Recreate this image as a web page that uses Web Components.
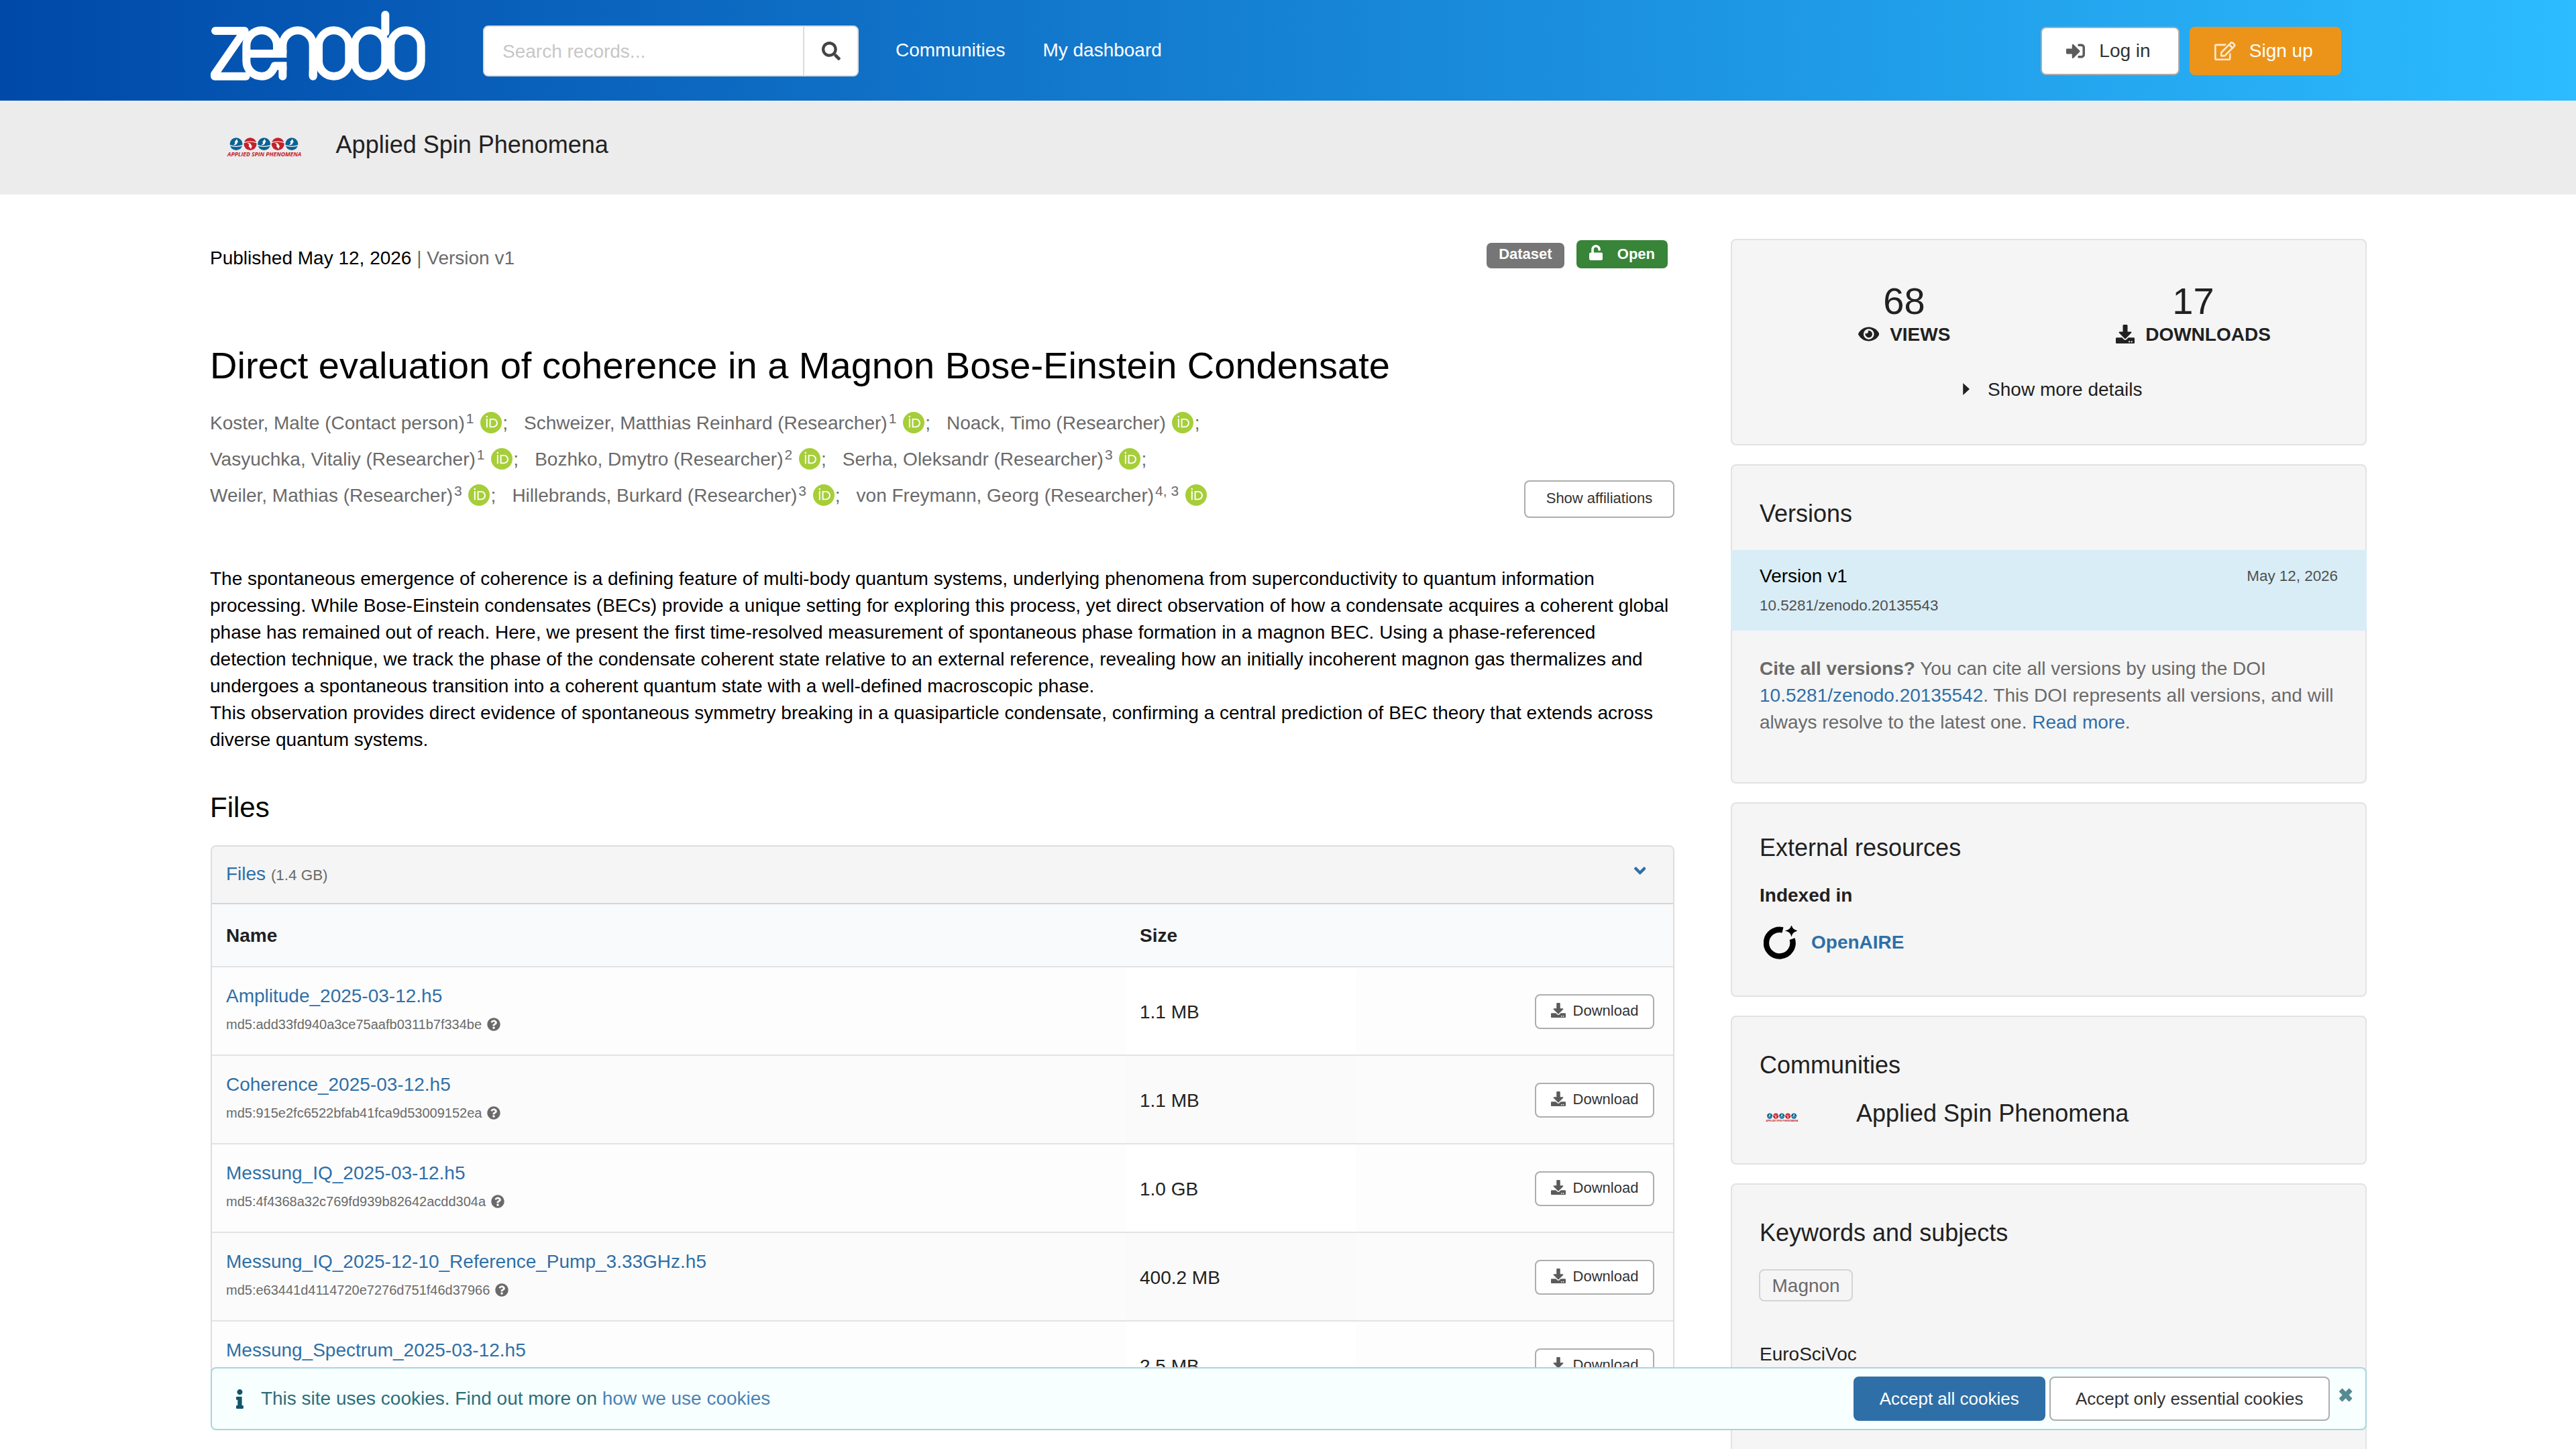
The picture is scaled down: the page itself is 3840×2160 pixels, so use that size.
<!DOCTYPE html>
<html lang="en">
<head>
<meta charset="utf-8">
<title>Direct evaluation of coherence in a Magnon Bose-Einstein Condensate</title>
<style>
	html, body {
		margin: 0;
		height: 2160px;
		overflow: hidden;
		background: #fff;
	}

	body {
		font: 28px/40px "Liberation Sans", Arial, sans-serif;
		color: #212121;
		--link: #2f6fa7;
		--muted: #6a6a6a;
	}
</style>
</head>
<body>
<record-page></record-page>

<script>
const ICONS = {
	search: [512, 'M505 442.7L405.3 343c-4.5-4.5-10.6-7-17-7H372c27.6-35.3 44-79.7 44-128C416 93.1 322.9 0 208 0S0 93.1 0 208s93.1 208 208 208c48.3 0 92.7-16.4 128-44v16.3c0 6.4 2.5 12.5 7 17l99.7 99.7c9.4 9.4 24.6 9.4 33.9 0l28.3-28.3c9.4-9.4 9.4-24.6.1-34zM208 336c-70.7 0-128-57.2-128-128 0-70.7 57.2-128 128-128 70.7 0 128 57.2 128 128 0 70.7-57.2 128-128 128z'],
	signin: [512, 'M416 448h-84c-6.6 0-12-5.4-12-12v-40c0-6.6 5.4-12 12-12h84c17.7 0 32-14.3 32-32V160c0-17.7-14.3-32-32-32h-84c-6.6 0-12-5.4-12-12V76c0-6.6 5.4-12 12-12h84c53 0 96 43 96 96v192c0 53-43 96-96 96zm-47-201L201 79c-15-15-41-4.5-41 17v96H24c-13.3 0-24 10.7-24 24v96c0 13.3 10.7 24 24 24h136v96c0 21.5 26 32 41 17l168-168c9.3-9.4 9.3-24.6 0-34z'],
	edit: [576, 'M402.3 344.9l32-32c5-5 13.7-1.5 13.7 5.7V464c0 26.5-21.5 48-48 48H48c-26.5 0-48-21.5-48-48V112c0-26.5 21.5-48 48-48h273.5c7.1 0 10.7 8.6 5.7 13.7l-32 32c-1.5 1.5-3.5 2.3-5.7 2.3H48v352h352V350.5c0-2.1.8-4.1 2.3-5.6zm156.6-201.8L296.3 405.7l-90.4 10c-26.2 2.9-48.5-19.2-45.6-45.6l10-90.4L432.9 17.1c22.9-22.9 59.9-22.9 82.7 0l43.2 43.2c22.9 22.9 22.9 60 .1 82.8zM460.1 174L402 115.9 216.2 301.8l-7.3 65.3 65.3-7.3L460.1 174zm64.8-79.7l-43.2-43.2c-4.1-4.1-10.8-4.1-14.8 0L436 82l58.1 58.1 30.9-30.9c4-4.2 4-10.8-.1-14.9z'],
	unlock: [448, 'M400 256H152V152.9c0-39.6 31.7-72.5 71.3-72.9 40-.4 72.7 32.1 72.7 72v16c0 13.3 10.7 24 24 24h32c13.3 0 24-10.7 24-24v-16C376 68 307.5-.3 223.5 0 139.5.3 72 69.5 72 153.5V256H48c-26.5 0-48 21.5-48 48v160c0 26.5 21.5 48 48 48h352c26.5 0 48-21.5 48-48V304c0-26.5-21.5-48-48-48z'],
	eye: [576, 'M572.52 241.4C518.29 135.59 410.93 64 288 64S57.68 135.64 3.48 241.41a32.35 32.35 0 0 0 0 29.19C57.71 376.41 165.07 448 288 448s230.32-71.64 284.52-177.41a32.35 32.35 0 0 0 0-29.19zM288 400a144 144 0 1 1 144-144 143.93 143.93 0 0 1-144 144zm0-240a95.31 95.31 0 0 0-25.31 3.79 47.85 47.85 0 0 1-66.9 66.9A95.78 95.78 0 1 0 288 160z'],
	download: [512, 'M216 0h80c13.3 0 24 10.7 24 24v168h87.7c17.8 0 26.7 21.5 14.1 34.1L269.7 378.3c-7.5 7.5-19.8 7.5-27.3 0L90.1 226.1c-12.6-12.6-3.7-34.1 14.1-34.1H192V24c0-13.3 10.7-24 24-24zm296 376v112c0 13.3-10.7 24-24 24H24c-13.3 0-24-10.7-24-24V376c0-13.3 10.7-24 24-24h146.7l49 49c20.1 20.1 52.5 20.1 72.6 0l49-49H488c13.3 0 24 10.7 24 24zm-124 88c0-11-9-20-20-20s-20 9-20 20 9 20 20 20 20-9 20-20zm64 0c0-11-9-20-20-20s-20 9-20 20 9 20 20 20 20-9 20-20z'],
	question: [512, 'M504 256c0 136.997-111.043 248-248 248S8 392.997 8 256C8 119.083 119.043 8 256 8s248 111.083 248 248zM262.655 90c-54.497 0-89.255 22.957-116.549 63.758-3.536 5.286-2.353 12.415 2.715 16.258l34.699 26.31c5.205 3.947 12.621 3.008 16.665-2.122 17.864-22.658 30.113-35.797 57.303-35.797 20.429 0 45.698 13.148 45.698 32.958 0 14.976-12.363 22.667-32.534 33.976C247.128 238.528 216 254.941 216 296v4c0 6.627 5.373 12 12 12h56c6.627 0 12-5.373 12-12v-1.333c0-28.462 83.186-29.647 83.186-106.667 0-58.002-60.165-102-116.531-102zM256 338c-25.365 0-46 20.635-46 46 0 25.364 20.635 46 46 46s46-20.636 46-46c0-25.364-20.635-46-46-46z'],
	down: [320, 'M143 352.3L7 216.3c-9.4-9.4-9.4-24.6 0-33.9l22.6-22.6c9.4-9.4 24.6-9.4 33.9 0l96.4 96.4 96.4-96.4c9.4-9.4 24.6-9.4 33.9 0l22.6 22.6c9.4 9.4 9.4 24.6 0 33.9l-136 136c-9.2 9.4-24.4 9.4-33.8 0z'],
	caret: [192, 'M4 92L184 256L4 420z'],
	info: [192, 'M20 424.229h20V279.771H20c-11.046 0-20-8.954-20-20V212c0-11.046 8.954-20 20-20h112c11.046 0 20 8.954 20 20v212.229h20c11.046 0 20 8.954 20 20V492c0 11.046-8.954 20-20 20H20c-11.046 0-20-8.954-20-20v-47.771c0-11.046 8.954-20 20-20zM96 0C56.235 0 24 32.235 24 72s32.235 72 72 72 72-32.235 72-72S135.764 0 96 0z'],
	close: [352, 'M176 174L103 101Q91 89 79 101L21 159Q9 171 21 183L94 256L21 329Q9 341 21 353L79 411Q91 423 103 411L176 338L249 411Q261 423 273 411L331 353Q343 341 331 329L258 256L331 183Q343 171 331 159L273 101Q261 89 249 101z']
};

// registers an element whose shadow root is rendered once from its attributes
function define(name, render) {
	customElements.define(name, class extends HTMLElement {
		connectedCallback() {
			if (this.shadowRoot) {
				return;
			}
			const t = document.createElement('template');
			t.innerHTML = render(this);
			this.attachShadow({ mode: 'open' }).appendChild(t.content.cloneNode(true));
		}
	});
}

define('ui-icon', e => {
	const [w, d] = ICONS[e.getAttribute('name')];
	return `
		<style>
			:host { display: inline-flex; flex: none; }
			svg { display: block; height: 1em; width: ${w / 512}em; fill: currentColor; }
		</style>
		<svg viewBox="0 0 ${w} 512"><path d="${d}"/></svg>`;
});

define('ui-button', () => `
	<style>
		:host {
			display: inline-flex;
			flex: none;
			align-items: center;
			justify-content: center;
			box-sizing: border-box;
			height: 72px;
			border: 2px solid #adadad;
			border-radius: 8px;
			background: #fff;
			color: #333;
			white-space: nowrap;
		}
		:host([kind=primary]) { background: #2f6fa7; border-color: #2f6fa7; color: #fff; }
		:host([kind=signup]) { background: #ec9419; border-color: #ec9419; color: #fff; }
		:host([size=small]) { font-size: 22px; }
	</style>
	<slot></slot>`);

define('zenodo-logo', () => `
	<style>
		:host { display: block; width: 322px; height: 106px; }
		svg { display: block; width: 100%; height: 100%; fill: none; stroke: #fff; stroke-width: 36; stroke-linecap: round; stroke-linejoin: round; }
	</style>
	<svg viewBox="39 15 966 318" role="img" aria-label="Zenodo home">
		<polyline points="63,108 194,108 60,302 60,311 200,311"/>
		<path stroke-linecap="butt" d="M382 210H202M339 212V175a68.5 69 0 0 0-137 0v68a68.5 68 0 0 0 68.5 68c30 0 48-20 58-46H382"/>
		<line x1="364" y1="266" x2="364" y2="311"/>
		<path d="M364 210V175a68 69 0 0 1 136 0V311" stroke-linecap="butt"/>
		<line x1="500" y1="290" x2="500" y2="311"/>
		<rect x="525" y="106" width="136" height="205" rx="68"/>
		<rect x="686" y="106" width="137" height="205" rx="68"/>
		<line x1="823" y1="36" x2="823" y2="115"/>
		<rect x="847" y="106" width="136" height="205" rx="68"/>
	</svg>`);

define('community-logo', () => {
	const ball = (x, up) => `
		<g transform="translate(${x} 60)${up ? '' : ' scale(1 -1)'}">
			<circle r="28.5" fill="${up ? '#0b6293' : '#c4212b'}"/>
			<path d="M-29 6Q0 16 29 6" fill="none" stroke="#fff" stroke-width="3.5"/>
			<path d="M-14 5Q-5 2-4-7L-8-8 3-22 9-7 5-8Q5 6-14 5z" fill="#fff"/>
		</g>`;
	return `
		<style>
			:host { display: block; flex: none; width: 112.6px; height: 30.6px; }
			svg { display: block; width: 100%; height: 100%; overflow: visible; }
		</style>
		<svg viewBox="24 28 338 92">
			${[66, 129, 191, 253, 315].map((x, i) => ball(x, i % 2 === 0)).join('')}
			<text x="27" y="116" textLength="331" lengthAdjust="spacingAndGlyphs" font-family="Open Sans, sans-serif" font-size="28" font-style="italic" font-weight="700" fill="#c4212b">APPLIED SPIN PHENOMENA</text>
		</svg>`;
});

define('site-header', () => `
	<style>
		:host {
			display: flex;
			align-items: center;
			box-sizing: border-box;
			height: 150px;
			padding: 0 350px 0 313px;
			background: linear-gradient(90deg, #0049a9, #2cbcff);
		}
		zenodo-logo { margin-bottom: 14px; }
		.search {
			display: flex;
			box-sizing: border-box;
			width: 560px;
			height: 76px;
			margin: 2px 0 0 85px;
			border: 2px solid #dcdcdc;
			border-radius: 8px;
			background: #fff;
			line-height: 73px;
		}
		.field { flex: 1; padding-left: 27px; color: #c7c7c7; border-right: 2px solid #dcdcdc; }
		.go { display: flex; width: 79px; align-items: center; justify-content: center; color: #444; }
		nav { display: flex; gap: 56px; margin-left: 55px; color: #fff; }
		.account { display: flex; gap: 15px; margin: 2px 0 0 auto; line-height: 42px; }
		.account ui-button { box-sizing: border-box; padding-right: 5px; }
		ui-icon { opacity: .8; }
		.go ui-icon { opacity: 1; }
	</style>
	<zenodo-logo></zenodo-logo>
	<div class="search">
		<span class="field">Search records...</span>
		<span class="go"><ui-icon name="search"></ui-icon></span>
	</div>
	<nav><span>Communities</span><span>My dashboard</span></nav>
	<div class="account">
		<ui-button style="width: 207px; gap: 21px"><ui-icon name="signin"></ui-icon>Log in</ui-button>
		<ui-button kind="signup" style="width: 226px; gap: 20px"><ui-icon name="edit"></ui-icon>Sign up</ui-button>
	</div>`);

define('community-bar', () => `
	<style>
		:host {
			display: flex;
			gap: 50px;
			box-sizing: border-box;
			height: 140px;
			padding: 44px 0 0 338px;
			background: #ececec;
			font-size: 36px;
			line-height: 44px;
		}
		community-logo { margin-top: 10px; }
	</style>
	<community-logo></community-logo>
	<span>Applied Spin Phenomena</span>`);

define('record-author', e => `
	<style>
		:host { display: inline-flex; height: 54px; line-height: 56px; white-space: nowrap; }
		sup { margin-left: 2px; font-size: 21px; line-height: 42px; vertical-align: top; }
		svg { display: block; width: 32px; height: 32px; margin: 11px 1.2px 0 9.7px; }
	</style>
	<span><slot></slot></span>${e.dataset.affiliation ? `<sup>${e.dataset.affiliation}</sup>` : ''}
	<svg viewBox="0 0 256 256">
		<circle cx="128" cy="128" r="128" fill="#a6ce39"/>
		<g fill="#fff">
			<rect x="70.9" y="79.1" width="15.4" height="107.1"/>
			<circle cx="78.6" cy="56.8" r="10.1"/>
			<path d="M108.9 79.1h41.6c39.6 0 57 28.3 57 53.6 0 27.5-21.5 53.6-56.8 53.6h-41.8V79.1zm15.4 93.3h24.5c34.9 0 42.9-26.5 42.9-39.7C191.7 111.2 178 93 148 93h-23.7v79.4z"/>
		</g>
	</svg>${e.hasAttribute('last') ? '' : '<span>;</span>'}`);

define('file-row', e => `
	<style>
		:host { display: flex; box-sizing: border-box; height: 132px; border-top: 2px solid #e2e3e4; background: #fdfdfd; }
		:host(:nth-of-type(even)) { background: #fbfbfb; }
		.name { width: 1342px; padding: 23px 0 0 21px; }
		a { display: block; color: var(--link); }
		.sum { display: flex; align-items: center; gap: 8px; margin-top: 2px; font-size: 20px; color: var(--muted); }
		.size { width: 322px; padding-left: 20px; line-height: 133px; background: #fff; }
		:host(:nth-of-type(even)) .size { background: #fafafa; }
		.action { flex: 1; display: flex; justify-content: flex-end; padding: 40px 28px 0 0; }
		ui-button { width: 178px; height: 52px; gap: 11px; line-height: 48px; }
		ui-button ui-icon { opacity: .8; margin-bottom: 5px; }
		ui-button span { margin-bottom: 3px; }
	</style>
	<div class="name">
		<a>${e.dataset.name}</a>
		<div class="sum"><span>md5:${e.dataset.md5}</span><ui-icon name="question"></ui-icon></div>
	</div>
	<div class="size">${e.dataset.size}</div>
	<div class="action"><ui-button size="small"><ui-icon name="download"></ui-icon><span>Download</span></ui-button></div>`);

define('file-list', () => `
	<style>
		:host {
			display: block;
			box-sizing: border-box;
			margin: 29px 0 0 1px;
			border: 2px solid #dcdddd;
			border-radius: 8px 8px 0 0;
			overflow: hidden;
		}
		.head {
			display: flex;
			justify-content: space-between;
			box-sizing: border-box;
			height: 86px;
			padding: 0 41px 0 21px;
			border-bottom: 2px solid #d4d5d5;
			background: #f5f5f5;
			color: var(--link);
			line-height: 81px;
		}
		small { font-size: 22.4px; color: var(--muted); }
		.head ui-icon { margin-top: 22px; height: 28px; }
		.cols { display: flex; height: 92px; line-height: 94px; background: #f9fafc; font-weight: bold; }
		.cols span:first-child { width: 1362px; padding-left: 21px; }
	</style>
	<div class="head"><span>Files <small>(1.4 GB)</small></span><ui-icon name="down"></ui-icon></div>
	<div class="cols"><span>Name</span><span>Size</span></div>
	<slot></slot>`);

define('record-main', () => `
	<style>
		:host { display: block; width: 2183px; padding-top: 68px; color: #000; }
		.meta { display: flex; justify-content: space-between; height: 52px; line-height: 54px; }
		.meta i { font-style: normal; color: var(--muted); }
		.badges { display: flex; align-items: flex-end; gap: 18px; height: 42px; margin-right: 10px; color: #fff; font: bold 22px/34px "Liberation Sans", Arial, sans-serif; }
		.badges span { box-sizing: border-box; height: 38px; padding: 0 18px; border-radius: 7px; background: #767676; }
		.badges .open { display: flex; align-items: center; gap: 22px; height: 42px; padding: 0 19px 5px 19px; background: #388438; }
		.open ui-icon { font-size: 23px; margin-bottom: 1px; }
		.open b { margin-top: 5px; }
		h1 { margin: 99px 0 22px; font-size: 56px; font-weight: 400; line-height: 72px; }
		.people { display: flex; justify-content: space-between; align-items: flex-end; height: 169px; }
		.authors { display: flex; flex-wrap: wrap; column-gap: 24px; align-self: flex-start; width: 1640px; color: var(--muted); }
		.people ui-button { width: 224px; height: 56px; padding-bottom: 2px; }
		p { margin: 0; }
		.people + p { margin-top: 71px; }
		h2 { margin: 54px 0 0; font-size: 42px; font-weight: 400; line-height: 54px; }
		file-list { color: #212121; }
	</style>
	<div class="meta">
		<span>Published May 12, 2026 <i>| Version v1</i></span>
		<div class="badges">
			<span>Dataset</span>
			<span class="open"><ui-icon name="unlock"></ui-icon><b>Open</b></span>
		</div>
	</div>
	<h1>Direct evaluation of coherence in a Magnon Bose-Einstein Condensate</h1>
	<div class="people">
		<div class="authors">
			<record-author data-affiliation="1">Koster, Malte (Contact person)</record-author>
			<record-author data-affiliation="1">Schweizer, Matthias Reinhard (Researcher)</record-author>
			<record-author>Noack, Timo (Researcher)</record-author>
			<record-author data-affiliation="1">Vasyuchka, Vitaliy (Researcher)</record-author>
			<record-author data-affiliation="2">Bozhko, Dmytro (Researcher)</record-author>
			<record-author data-affiliation="3">Serha, Oleksandr (Researcher)</record-author>
			<record-author data-affiliation="3">Weiler, Mathias (Researcher)</record-author>
			<record-author data-affiliation="3">Hillebrands, Burkard (Researcher)</record-author>
			<record-author data-affiliation="4, 3" last>von Freymann, Georg (Researcher)</record-author>
		</div>
		<ui-button size="small">Show affiliations</ui-button>
	</div>
	<p>The spontaneous emergence of coherence is a defining feature of multi-body quantum systems, underlying phenomena from superconductivity to quantum information processing. While Bose-Einstein condensates (BECs) provide a unique setting for exploring this process, yet direct observation of how a condensate acquires a coherent global phase has remained out of reach. Here, we present the first time-resolved measurement of spontaneous phase formation in a magnon BEC. Using a phase-referenced detection technique, we track the phase of the condensate coherent state relative to an external reference, revealing how an initially incoherent magnon gas thermalizes and undergoes a spontaneous transition into a coherent quantum state with a well-defined macroscopic phase.</p>
	<p>This observation provides direct evidence of spontaneous symmetry breaking in a quasiparticle condensate, confirming a central prediction of BEC theory that extends across diverse quantum systems.</p>
	<h2>Files</h2>
	<file-list>
		<file-row data-name="Amplitude_2025-03-12.h5" data-md5="add33fd940a3ce75aafb0311b7f334be" data-size="1.1 MB"></file-row>
		<file-row data-name="Coherence_2025-03-12.h5" data-md5="915e2fc6522bfab41fca9d53009152ea" data-size="1.1 MB"></file-row>
		<file-row data-name="Messung_IQ_2025-03-12.h5" data-md5="4f4368a32c769fd939b82642acdd304a" data-size="1.0 GB"></file-row>
		<file-row data-name="Messung_IQ_2025-12-10_Reference_Pump_3.33GHz.h5" data-md5="e63441d4114720e7276d751f46d37966" data-size="400.2 MB"></file-row>
		<file-row data-name="Messung_Spectrum_2025-03-12.h5" data-md5="" data-size="2.5 MB"></file-row>
	</file-list>`);

define('side-card', e => `
	<style>
		:host {
			display: block;
			box-sizing: border-box;
			border: 2px solid #e2e2e2;
			border-radius: 8px;
			background: #f5f5f5;
			padding: 50px 41px 0;
		}
		h3 { margin: 0; font-size: 36px; font-weight: 400; line-height: 44px; }
	</style>
	${e.dataset.heading ? `<h3>${e.dataset.heading}</h3>` : ''}
	<slot></slot>`);

define('record-stat', e => `
	<style>
		:host { display: block; flex: 1; text-align: center; }
		.count { font-size: 56px; line-height: 56px; }
		.label { display: flex; align-items: center; justify-content: center; gap: 16px; margin-top: 2px; font-weight: bold; }
		ui-icon { margin-bottom: 2px; }
	</style>
	<div class="count">${e.dataset.count}</div>
	<div class="label"><ui-icon name="${e.dataset.icon}"></ui-icon><slot></slot></div>`);

define('record-sidebar', () => `
	<style>
		:host { display: flex; flex-direction: column; gap: 28px; width: 948px; padding-top: 66px; }
		a { color: var(--link); }
		.stats { height: 308px; padding-top: 63px; }
		.row { display: flex; }
		.more { display: flex; align-items: center; justify-content: center; gap: 27px; margin-top: 42px; padding-left: 11px; }
		.more ui-icon { margin-bottom: 2px; }
		.versions { height: 476px; }
		.current { height: 120px; box-sizing: border-box; margin: 32px -43px 0; padding: 19px 43px 0; background: #d9edf6; color: #000; }
		.current .row { justify-content: space-between; margin-bottom: 4px; }
		.current small { font-size: 22.4px; color: #505050; }
		.current .row + small { display: block; }
		.cite { margin: 37px 0 0; color: var(--muted); white-space: nowrap; }
		.external { height: 290px; padding-top: 44px; }
		.external > b { display: block; margin-top: 29px; }
		.index { display: flex; align-items: center; gap: 21px; height: 50px; margin-top: 25px; padding-left: 6px; font-weight: bold; }
		.communities { height: 222px; }
		.community { display: flex; margin-top: 28px; padding-left: 9px; font-size: 36px; line-height: 44px; }
		.community community-logo { width: 49px; height: 13.4px; margin: 21px 86px 0 0; }
		.keywords { height: 500px; padding-top: 50px; }
		.tag { display: inline-block; box-sizing: border-box; height: 48px; margin-top: 32px; margin-left: -1px; padding: 0 17.5px; border: 2px solid #d4d4d4; border-radius: 8px; line-height: 46px; color: var(--muted); }
		.vocabulary { margin-top: 59px; }
	</style>
	<side-card class="stats">
		<div class="row">
			<record-stat data-count="68" data-icon="eye">VIEWS</record-stat>
			<record-stat data-count="17" data-icon="download">DOWNLOADS</record-stat>
		</div>
		<div class="more"><ui-icon name="caret"></ui-icon>Show more details</div>
	</side-card>
	<side-card class="versions" data-heading="Versions">
		<div class="current">
			<div class="row"><span>Version v1</span><small>May 12, 2026</small></div>
			<small>10.5281/zenodo.20135543</small>
		</div>
		<p class="cite"><b>Cite all versions?</b> You can cite all versions by using the DOI<br><a>10.5281/zenodo.20135542</a>. This DOI represents all versions, and will<br>always resolve to the latest one. <a>Read more</a>.</p>
	</side-card>
	<side-card class="external" data-heading="External resources">
		<b>Indexed in</b>
		<div class="index">
			<svg width="50" height="50" viewBox="0 0 50 50">
				<path d="M28.5 6.4A19.8 19.8 0 1 0 42.6 19.6" fill="none" stroke="#000" stroke-width="8.4"/>
				<path d="M41.5 1Q43 6 48.500 7.500Q43 9 41.500 14Q40 9 34.500 7.500Q40 6 41.500 1z" stroke="#000" stroke-width="1.500"/>
			</svg>
			<a>OpenAIRE</a>
		</div>
	</side-card>
	<side-card class="communities" data-heading="Communities">
		<div class="community"><community-logo></community-logo>Applied Spin Phenomena</div>
	</side-card>
	<side-card class="keywords" data-heading="Keywords and subjects">
		<span class="tag">Magnon</span>
		<div class="vocabulary">EuroSciVoc</div>
	</side-card>`);

define('cookie-banner', () => `
	<style>
		:host {
			position: fixed;
			left: 314px;
			top: 2038px;
			display: flex;
			align-items: center;
			box-sizing: border-box;
			width: 3214px;
			height: 94px;
			padding: 0 19px 0 36px;
			border: 2px solid #a9d5de;
			border-radius: 8px;
			background: #f8ffff;
			color: #2b6f7b;
		}
		.info { margin-right: 26px; font-size: 29px; color: #0e566c; }
		a { color: #4a83b5; }
		.buttons { display: flex; gap: 6px; margin-left: auto; font-size: 26px; }
		ui-button { height: 66px; }
		.close { margin: 0 0 12px 13px; font-size: 31px; color: #558b93; }
	</style>
	<ui-icon class="info" name="info"></ui-icon>
	<span>This site uses cookies. Find out more on <a>how we use cookies</a></span>
	<div class="buttons">
		<ui-button kind="primary" style="width: 286px">Accept all cookies</ui-button>
		<ui-button style="width: 418px">Accept only essential cookies</ui-button>
	</div>
	<ui-icon class="close" name="close"></ui-icon>`);

define('record-page', () => `
	<style>
		:host { display: block; height: 2160px; overflow: hidden; }
		main { display: flex; gap: 84px; padding-left: 313px; }
	</style>
	<site-header></site-header>
	<community-bar></community-bar>
	<main>
		<record-main></record-main>
		<record-sidebar></record-sidebar>
	</main>
	<cookie-banner></cookie-banner>`);
</script>
</body>
</html>
